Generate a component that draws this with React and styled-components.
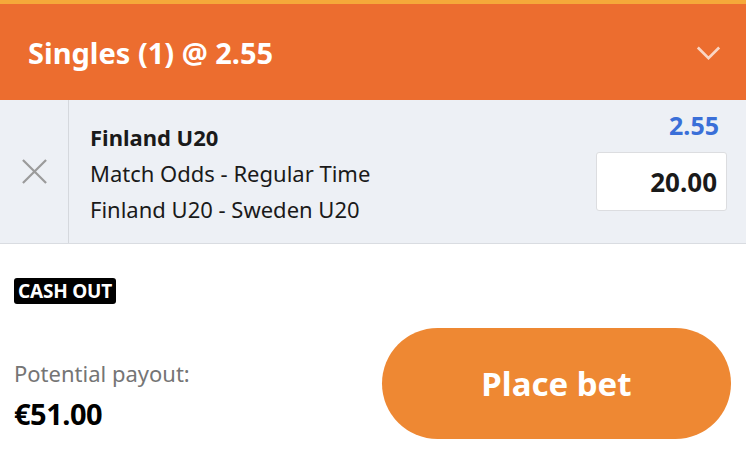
import React from 'react';
import styled, { createGlobalStyle } from 'styled-components';

const GlobalStyle = createGlobalStyle`
    body, html {
        margin: 0;
        padding: 0;
        width: 100%;
        height: 100%;
        background: #ffffff;
        font-family: "Noto Sans", "Open Sans", sans-serif;
    }
`;

const Slip = styled.div`
    width: 746px;
    height: 468px;
    overflow: hidden;
    background: #ffffff;
`;

const Header = styled.div`
    height: 96px;
    border-top: 4px solid #f5a93a;
    background: #ec6d2f;
    display: flex;
    align-items: center;
    justify-content: space-between;
    padding: 0 24px 0 28px;
`;

const Title = styled.h2`
    margin: 0;
    color: #ffffff;
    font-size: 29px;
    font-weight: 700;
`;

const Chevron = styled.svg`
    width: 27px;
    height: 27px;
    color: rgba(255, 255, 255, 0.72);
`;

const BetRow = styled.div`
    display: flex;
    height: 143px;
    background: #edf0f5;
    border-bottom: 1px solid #d9dce1;
`;

const RemoveCell = styled.div`
    width: 68px;
    border-right: 1px solid #d5d8dd;
    display: flex;
    align-items: center;
    justify-content: center;
    color: #9b9b9b;
`;

const Selection = styled.div`
    flex: 1;
    padding: 19px 0 0 21px;
    display: flex;
    flex-direction: column;
`;

const Line = styled.div`
    font-size: 22px;
    line-height: 36px;
    color: #1a1a1a;
    font-weight: ${p => (p.$bold ? 700 : 400)};
`;

const StakeCol = styled.div`
    display: flex;
    flex-direction: column;
    align-items: flex-end;
    padding: 9px 19px 0 0;
`;

const Odds = styled.div`
    color: #3a6fd8;
    font-size: 25px;
    font-weight: 700;
    line-height: 32px;
    padding-right: 8px;
`;

const StakeInput = styled.div`
    margin-top: 11px;
    width: 131px;
    height: 59px;
    box-sizing: border-box;
    background: #ffffff;
    border: 1px solid #dcdde0;
    border-radius: 3px;
    display: flex;
    align-items: center;
    justify-content: flex-end;
    padding-right: 9px;
    font-size: 26px;
    font-weight: 700;
    color: #1a1a1a;
`;

const Bottom = styled.div`
    padding: 34px 15px 0 14px;
`;

const Badge = styled.div`
    width: fit-content;
    background: #000000;
    color: #ffffff;
    font-size: 19px;
    font-weight: 700;
    line-height: 26px;
    padding: 0 4px;
    border-radius: 3px;
    letter-spacing: -0.2px;
`;

const PayRow = styled.div`
    display: flex;
    justify-content: space-between;
    align-items: flex-start;
    margin-top: 24px;
`;

const Payout = styled.div`
    padding-top: 32px;
    display: flex;
    flex-direction: column;
`;

const PayLabel = styled.div`
    color: #757575;
    font-size: 22px;
    line-height: 26px;
`;

const PayAmount = styled.div`
    margin-top: 12px;
    color: #000000;
    font-size: 29px;
    font-weight: 700;
    line-height: 32px;
    letter-spacing: -0.5px;
`;

const PlaceButton = styled.button`
    width: 349px;
    height: 111px;
    border: none;
    border-radius: 56px;
    background: #ee8833;
    color: #ffffff;
    font-family: inherit;
    font-size: 33px;
    font-weight: 700;
`;

export default function App() {
    return (
        <>
            <GlobalStyle />
            <Slip>
                <Header>
                    <Title>Singles (1) @ 2.55</Title>
                    <Chevron viewBox="0 0 24 24" fill="none" stroke="currentColor" strokeWidth="2.4">
                        <path d="M2.5 7.5l9.5 9.5 9.5-9.5" />
                    </Chevron>
                </Header>
                <BetRow>
                    <RemoveCell>
                        <svg width="27" height="27" viewBox="0 0 28 28" stroke="currentColor" strokeWidth="2.3">
                            <path d="M2 2l24 24M26 2L2 26" />
                        </svg>
                    </RemoveCell>
                    <Selection>
                        <Line $bold>Finland U20</Line>
                        <Line>Match Odds - Regular Time</Line>
                        <Line>Finland U20 - Sweden U20</Line>
                    </Selection>
                    <StakeCol>
                        <Odds>2.55</Odds>
                        <StakeInput>20.00</StakeInput>
                    </StakeCol>
                </BetRow>
                <Bottom>
                    <Badge>CASH OUT</Badge>
                    <PayRow>
                        <Payout>
                            <PayLabel>Potential payout:</PayLabel>
                            <PayAmount>€51.00</PayAmount>
                        </Payout>
                        <PlaceButton>Place bet</PlaceButton>
                    </PayRow>
                </Bottom>
            </Slip>
        </>
    );
}
